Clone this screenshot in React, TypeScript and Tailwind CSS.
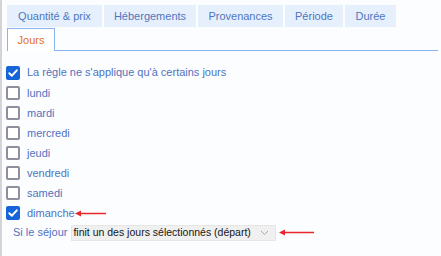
import React from "react";

const font = { fontFamily: '"Liberation Sans", Arial, sans-serif' };

function Box({ checked }: { checked: boolean }) {
  if (checked) {
    return (
      <span className="w-[14px] h-[14px] rounded-[2px] bg-[#1565d8] flex items-center justify-center shrink-0">
        <svg width="12" height="12" viewBox="0 0 12 12">
          <path d="M2.3 6.2 L4.9 8.7 L9.8 3.3" fill="none" stroke="#fff" strokeWidth="2" strokeLinecap="round" strokeLinejoin="round" />
        </svg>
      </span>
    );
  }
  return <span className="w-[14px] h-[14px] rounded-[2px] border-2 border-[#8e8e9c] bg-white shrink-0" />;
}

function Arrow({ w }: { w: number }) {
  return (
    <svg width={w} height="7" viewBox={`0 0 ${w} 7`} className="shrink-0">
      <line x1="4" y1="3.5" x2={w} y2="3.5" stroke="#e8262b" strokeWidth="1.5" />
      <path d="M0 3.5 L6 0.5 L6 6.5 Z" fill="#e8262b" />
    </svg>
  );
}

export default function App() {
  const tabs: [string, string][] = [
    ["Quantité & prix", "w-[95px]"],
    ["Hébergements", "w-[92px]"],
    ["Provenances", "w-[85px]"],
    ["Période", "w-[58px]"],
    ["Durée", "w-[51px]"],
  ];
  const days = ["lundi", "mardi", "mercredi", "jeudi", "vendredi", "samedi"];
  return (
    <div className="w-[441px] h-[256px] bg-[#fcfdfe] border-l-2 border-[#d4d4d8] text-[11px]" style={font}>
      <div className="pt-[5px] pl-[5px] pr-[3px]">
        <div className="flex gap-[2px]">
          {tabs.map(([t, w]) => (
            <div key={t} className={`${w} h-[22px] bg-[#e6f0fd] text-[#4f76bd] flex items-center justify-center`}>
              {t}
            </div>
          ))}
        </div>
        <div className="flex mt-[1px] border-b border-[#8ab3f2] h-[23px]">
          <div className="h-[23px] w-[48px] bg-white border border-b-0 border-[#8ab3f2] text-[#e5721c] flex items-center justify-center -mb-px">
            Jours
          </div>
        </div>
      </div>
      <div className="pl-[4px] pt-[11px] text-[#4f73bf]">
        <div className="flex items-center gap-[7px] h-[21px]">
          <Box checked />
          <span>La règle ne s'applique qu'à certains jours</span>
        </div>
        {days.map((d) => (
          <div key={d} className="flex items-center gap-[7px] h-[20px]">
            <Box checked={false} />
            <span>{d}</span>
          </div>
        ))}
        <div className="flex items-center gap-[7px] h-[20px]">
          <Box checked />
          <span>dimanche</span>
          <span className="-ml-[7px]"><Arrow w={31} /></span>
        </div>
        <div className="flex items-center h-[19px] pl-[7px]">
          <span className="mr-[4px]">Si le séjour</span>
          <div className="h-[16px] w-[205px] bg-[#f0f0f0] border border-[#e6e6e6] flex items-center pl-[1px] pr-[3px] text-[#151515] text-[10.5px]">
            <span>finit un des jours sélectionnés (départ)</span>
            <svg width="9" height="6" viewBox="0 0 9 6" className="ml-auto mr-[3px]">
              <path d="M1 1 L4.5 4.5 L8 1" fill="none" stroke="#a8a8a8" strokeWidth="1" />
            </svg>
          </div>
          <span className="ml-[3px]"><Arrow w={35} /></span>
        </div>
      </div>
    </div>
  );
}
